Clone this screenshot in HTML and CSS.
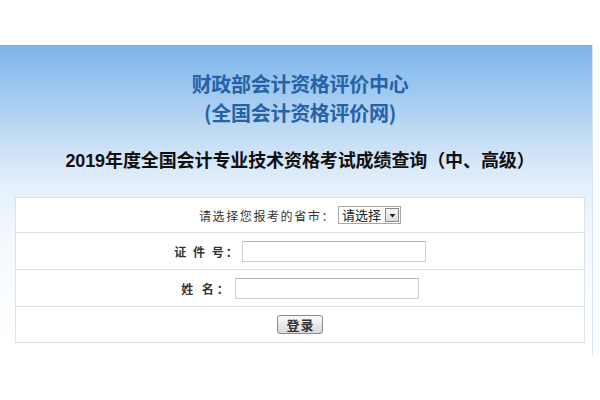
FILE: index.html
```html
<!DOCTYPE html>
<html lang="zh-CN">
<head>
<meta charset="utf-8">
<title>成绩查询</title>
<link rel="stylesheet" href="styles.css">
</head>
<body>
<div class="page">
  <div class="banner">
    <div class="org">
      <div class="org-line">财政部会计资格评价中心</div>
      <div class="org-line">(全国会计资格评价网)</div>
    </div>
    <h1 class="heading">2019年度全国会计专业技术资格考试成绩查询（中、高级）</h1>
    <div class="form">
      <div class="row first">
        <span class="label plain">请选择您报考的省市：</span>
        <span class="select"><span class="select-text">请选择</span><span class="arrow"><svg width="9" height="9" viewBox="0 0 9 9"><path d="M1.5 3 L7.5 3 L4.5 6.5 Z" fill="#222"/></svg></span></span>
      </div>
      <div class="row">
        <span class="label id">证 件 号：</span>
        <span class="input"></span>
      </div>
      <div class="row">
        <span class="label name">姓 名：</span>
        <span class="input"></span>
      </div>
      <div class="row last">
        <span class="button">登录</span>
      </div>
    </div>
  </div>
</div>
</body>
</html>
```
FILE: styles.css
```css
html, body {
  margin: 0;
  padding: 0;
  background: #ffffff;
}
body {
  font-family: "Noto Sans CJK SC", "Liberation Sans", sans-serif;
  color: #333;
}
.page {
  padding-top: 45px;
  width: 600px;
  height: 355px;
}
.banner {
  width: 593px;
  height: 310px;
  border-right: 1px solid #d4e4f4;
  background: linear-gradient(to bottom, #7db4ea 0px, #9ac6f0 40px, #c6def5 95px, #e4f0fb 140px, #f3f8fd 190px, #fbfdff 260px, #ffffff 310px);
  padding-top: 24px;
  box-sizing: border-box;
}
.org {
  text-align: center;
  color: #2662a6;
  font-size: 20px;
  font-weight: bold;
  line-height: 29px;
  padding-left: 8px;
}
.org-line {
  letter-spacing: -0.3px;
}
.heading {
  margin: 22px 0 0;
  padding-left: 8px;
  text-align: center;
  font-family: "Liberation Sans", "Noto Sans CJK SC", sans-serif;
  font-size: 18px;
  font-weight: bold;
  line-height: 24px;
  color: #111;
  letter-spacing: -0.1px;
}
.form {
  margin: 24px 0 0 15px;
  width: 570px;
  background: #fff;
  border: 1px solid #dbe3ea;
  box-sizing: border-box;
}
.row {
  height: 36px;
  display: flex;
  justify-content: center;
  align-items: center;
  border-bottom: 1px solid #dbe3ea;
  font-size: 12px;
}
.row.first {
  height: 34px;
}
.row.last {
  height: 35px;
  border-bottom: none;
}
.label {
  color: #333;
}
.label.plain {
  letter-spacing: 1.6px;
  margin-right: 3px;
}
.label.id {
  font-weight: bold;
  letter-spacing: 2px;
  margin-right: 2px;
}
.label.name {
  font-weight: bold;
  letter-spacing: 3px;
  margin-right: 3px;
}
.select {
  display: inline-flex;
  align-items: center;
  width: 63px;
  height: 18px;
  border: 1px solid #a8a8a8;
  background: #fff;
  padding-left: 3px;
  box-sizing: border-box;
}
.select-text {
  font-size: 13px;
  color: #222;
  line-height: 16px;
  margin-right: 2px;
}
.arrow {
  display: inline-flex;
  align-items: center;
  justify-content: center;
  width: 14px;
  height: 14px;
  border: 1px solid #888;
  background: linear-gradient(#f6f6f6, #dcdcdc);
  box-sizing: border-box;
  margin-left: auto;
  margin-right: 1px;
}
.input {
  display: inline-block;
  width: 184px;
  height: 21px;
  border: 1px solid #cfcfcf;
  border-top-color: #b8b8b8;
  box-sizing: border-box;
  background: #fff;
}
.button {
  display: inline-block;
  width: 46px;
  height: 19px;
  line-height: 17px;
  text-align: center;
  font-size: 13px;
  font-weight: bold;
  color: #333;
  border: 1px solid #8a8a8a;
  border-radius: 3px;
  background: linear-gradient(#fafafa, #dadada);
  box-sizing: border-box;
  letter-spacing: 1px;
  padding-left: 1px;
}
```
